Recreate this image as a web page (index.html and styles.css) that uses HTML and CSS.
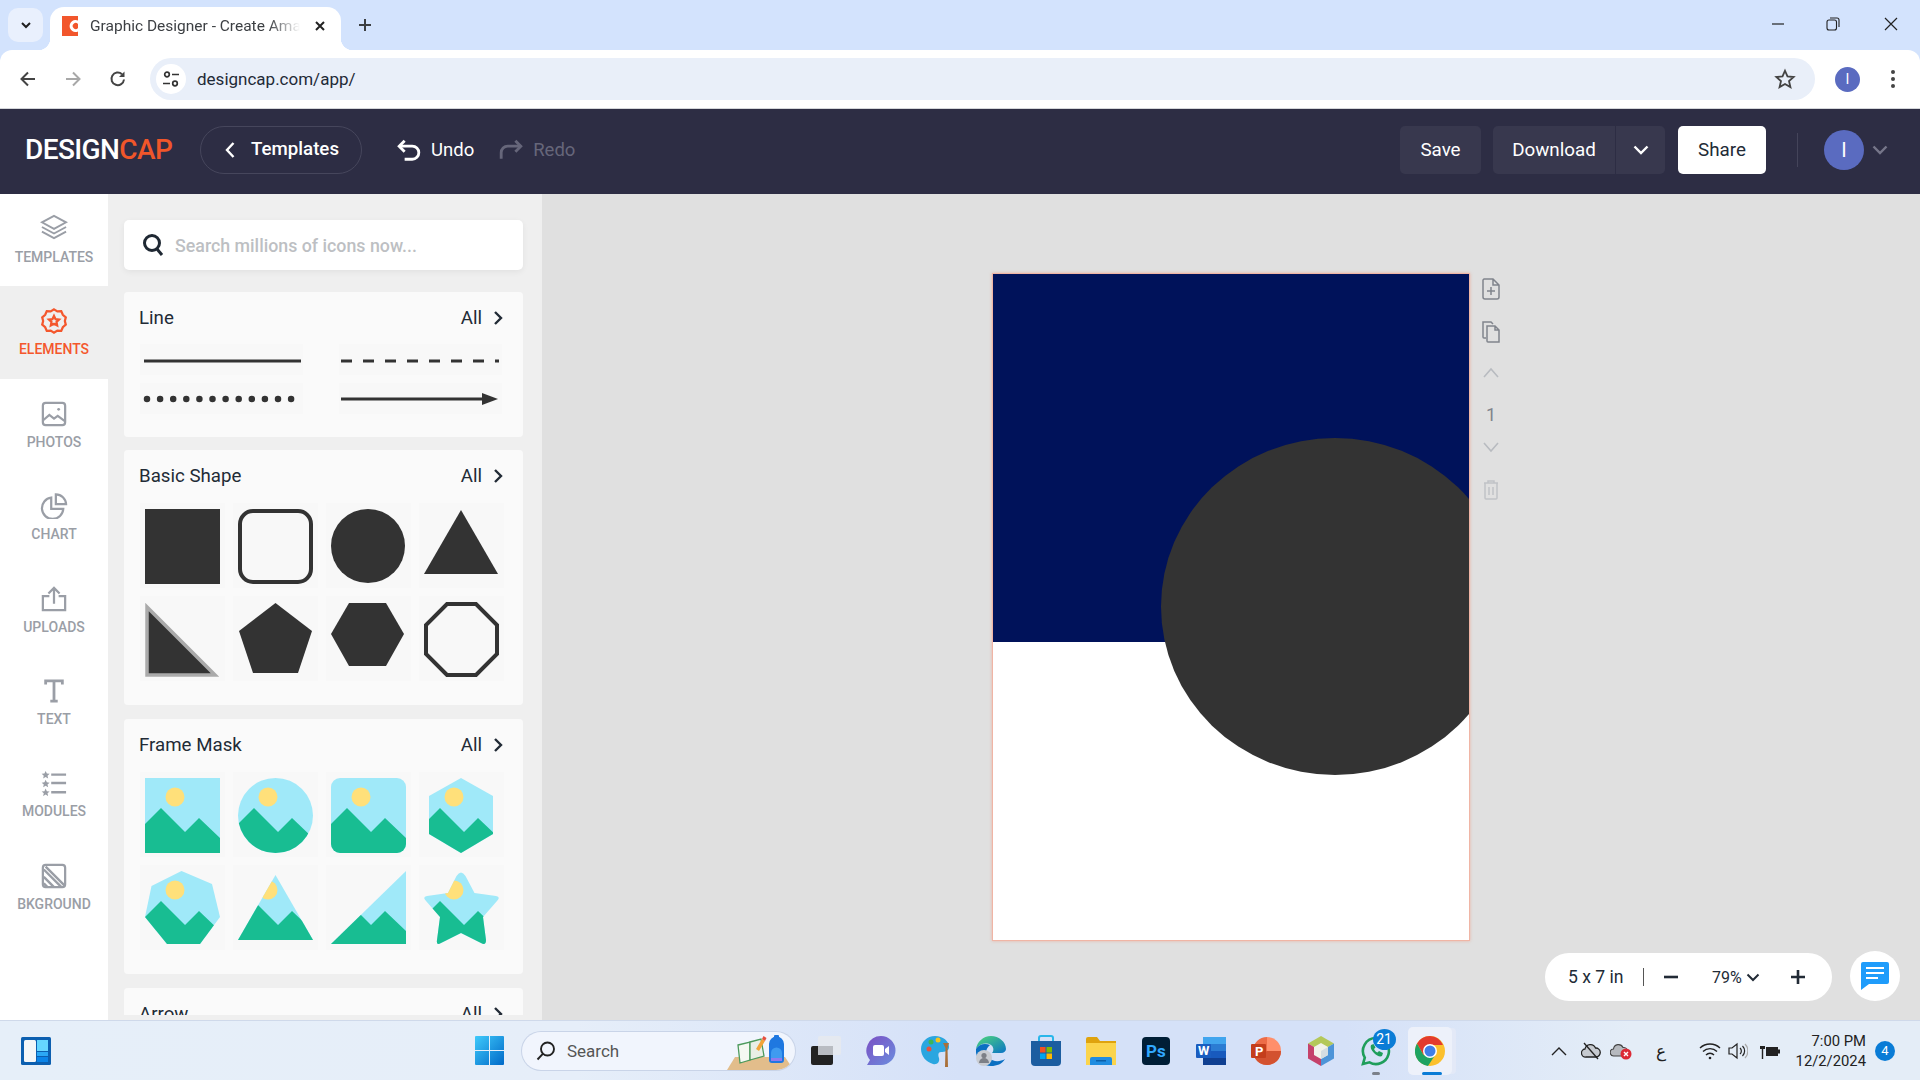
FILE: index.html
```html
<!DOCTYPE html>
<html lang="en">
<head>
<meta charset="utf-8">
<title>Graphic Designer - Create Amazing Graphics</title>
<link rel="stylesheet" href="styles.css">
</head>
<body>
<svg class="defs" width="0" height="0" aria-hidden="true">
  <defs>
    <g id="scene">
      <rect width="75" height="75" fill="#a0e9f9"/>
      <circle cx="30" cy="19" r="9.5" fill="#ffe07a"/>
      <path d="M0 46L16 30L40 54L54 40L75 60V75H0Z" fill="#18bd92"/>
    </g>
    <clipPath id="c-circle"><circle cx="37.5" cy="37.5" r="37.5"/></clipPath>
    <clipPath id="c-round"><rect width="75" height="75" rx="9"/></clipPath>
    <clipPath id="c-hex"><path d="M37 0L69 18V56L37 75L5 56V18Z"/></clipPath>
    <clipPath id="c-hept"><path d="M36.5 0L67 13L75 46L55 73L22 73L0 46L6.5 15Z"/></clipPath>
    <clipPath id="c-tri"><path d="M37.5 4L75 69H0Z"/></clipPath>
    <clipPath id="c-rtri"><path d="M75 0V73H0Z"/></clipPath>
    <clipPath id="c-star"><path d="M32.5 5Q37 -2 41.5 5L50.5 22L72 25Q77 26 73 30L59 46L62 69Q62 75 57 72L37 62L17 72Q12 75 13 69L16 46L2 30Q-2 26 3 25L24 22Z"/></clipPath>
  </defs>
</svg>

<div class="tabstrip">
  <div class="tab-list-btn"><svg width="14" height="14" viewBox="0 0 14 14"><path d="M3 5l4 4 4-4" fill="none" stroke="#1f1f1f" stroke-width="2"/></svg></div>
  <div class="tab">
    <svg class="favicon" width="16" height="20" viewBox="0 0 16 20"><rect width="16" height="20" fill="#f2562c"/><path d="M16 4.500A6 6 0 1 0 16 15.500V12A3 3 0 1 1 16 8Z" fill="#fff"/></svg>
    <span class="tab-title">Graphic Designer - Create Amazing</span>
    <svg class="tab-close" width="12" height="12" viewBox="0 0 12 12"><path d="M2 2l8 8M10 2l-8 8" stroke="#222" stroke-width="2"/></svg>
  </div>
  <svg class="new-tab" width="16" height="16" viewBox="0 0 16 16"><path d="M8 2v12M2 8h12" stroke="#3c3f43" stroke-width="2"/></svg>
  <div class="window-controls">
    <svg width="14" height="14" viewBox="0 0 14 14"><path d="M1 7h12" stroke="#222" stroke-width="1.200"/></svg>
    <svg width="14" height="14" viewBox="0 0 14 14"><rect x="1" y="3" width="9.500" height="10" rx="2" fill="none" stroke="#222" stroke-width="1.100"/><path d="M4 1h7a2 2 0 0 1 2 2v7" fill="none" stroke="#222" stroke-width="1.100"/></svg>
    <svg width="14" height="14" viewBox="0 0 14 14"><path d="M1 1l12 12M13 1L1 13" stroke="#222" stroke-width="1.200"/></svg>
  </div>
</div>

<div class="toolbar">
  <svg class="tb-icon" width="20" height="20" viewBox="0 0 20 20"><path d="M17 10H4M10 3.500L3.500 10l6.500 6.500" fill="none" stroke="#444" stroke-width="2"/></svg>
  <svg class="tb-icon tb-fwd" width="20" height="20" viewBox="0 0 20 20"><path d="M3 10h13M10 3.500l6.500 6.500-6.500 6.500" fill="none" stroke="#a8a8a8" stroke-width="2"/></svg>
  <svg class="tb-icon tb-reload" width="20" height="20" viewBox="0 0 20 20"><path d="M16 10.500A6.300 6.300 0 1 1 14 5.200" fill="none" stroke="#444" stroke-width="2"/><path d="M16.500 2.500V8H11Z" fill="#444"/></svg>
  <div class="omnibox">
    <div class="site-info"><svg width="18" height="18" viewBox="0 0 18 18"><circle cx="5" cy="4.500" r="2.300" fill="none" stroke="#333" stroke-width="1.700"/><path d="M10 4.500h7M1 13.500h7" stroke="#333" stroke-width="1.700"/><circle cx="13" cy="13.500" r="2.300" fill="none" stroke="#333" stroke-width="1.700"/></svg></div>
    <span class="url">designcap.com/app/</span>
    <svg class="star" width="22" height="22" viewBox="0 0 24 24"><path d="M12 3l2.700 6.200 6.700.6-5 4.500 1.500 6.600L12 17.400l-5.900 3.500 1.500-6.600-5-4.500 6.700-.6Z" fill="none" stroke="#444" stroke-width="2"/></svg>
  </div>
  <div class="chrome-avatar">I</div>
  <svg class="chrome-menu" width="6" height="20" viewBox="0 0 6 20"><circle cx="3" cy="3" r="2" fill="#444"/><circle cx="3" cy="10" r="2" fill="#444"/><circle cx="3" cy="17" r="2" fill="#444"/></svg>
</div>

<header class="app-header">
  <div class="logo">DESIGN<span class="logo-accent">CAP</span></div>
  <div class="templates-btn">
    <svg width="12" height="18" viewBox="0 0 12 18"><path d="M9.500 2L3 9l6.500 7" fill="none" stroke="#fff" stroke-width="2.400"/></svg>
    <span>Templates</span>
  </div>
  <div class="history">
    <svg width="24" height="24" viewBox="0 0 22 22"><path d="M7 2.500L2 7.500l5 5" fill="none" stroke="#fff" stroke-width="2.600"/><path d="M2.500 7.500H14a6 6 0 0 1 0 12H7" fill="none" stroke="#fff" stroke-width="2.600"/></svg>
    <span>Undo</span>
  </div>
  <div class="history is-disabled">
    <svg width="24" height="24" viewBox="0 0 22 22"><path d="M15 2.500l5 5-5 5" fill="none" stroke="#66667a" stroke-width="2.600"/><path d="M19.500 7.500H8a6 6 0 0 0-6 6V19" fill="none" stroke="#66667a" stroke-width="2.600"/></svg>
    <span>Redo</span>
  </div>
  <div class="header-actions">
    <div class="dark-btn save-btn">Save</div>
    <div class="dark-btn download-btn">
      <span class="download-label">Download</span>
      <span class="download-caret"><svg width="16" height="10" viewBox="0 0 16 10"><path d="M1.500 1.500L8 8l6.500-6.500" fill="none" stroke="#fff" stroke-width="2.400"/></svg></span>
    </div>
    <div class="share-btn">Share</div>
    <div class="header-divider"></div>
    <div class="user-avatar">I</div>
    <svg class="user-caret" width="16" height="10" viewBox="0 0 16 10"><path d="M1.500 1.500L8 8l6.500-6.500" fill="none" stroke="#76768a" stroke-width="2.400"/></svg>
  </div>
</header>

<main class="main">
  <nav class="sidebar">
    <div class="nav-item">
      <svg width="28" height="28" viewBox="0 0 28 28" fill="none" stroke="#9a9ea6" stroke-width="2"><path d="M14 2L27 9 14 16 1 9Z"/><path d="M1 14l13 7 13-7M1 19l13 7 13-7"/></svg>
      <span>TEMPLATES</span>
    </div>
    <div class="nav-item is-active">
      <svg width="28" height="28" viewBox="0 0 28 28" fill="none" stroke="#f4572d" stroke-width="2.400"><path d="M14 1.500l3.600 2.200 4.200-.3 1.700 3.900 3.200 2.700-1 4 1 4-3.200 2.700-1.700 3.900-4.200-.3L14 26.500l-3.600-2.200-4.200.3-1.700-3.900L1.300 18l1-4-1-4 3.200-2.700 1.700-3.900 4.200.3Z"/><path d="M14 8.500l1.700 3.500 3.800.5-2.800 2.600.7 3.800-3.400-1.800-3.400 1.800.7-3.800-2.800-2.600 3.800-.5Z"/></svg>
      <span>ELEMENTS</span>
    </div>
    <div class="nav-item">
      <svg width="28" height="28" viewBox="0 0 28 28" fill="none" stroke="#9a9ea6" stroke-width="2.400"><rect x="2" y="2" width="24" height="24" rx="3"/><path d="M2 21l7-6 5 4 4-3 8 6"/><circle cx="19" cy="9" r="1.500" fill="#9a9ea6" stroke="none"/></svg>
      <span>PHOTOS</span>
    </div>
    <div class="nav-item">
      <svg width="30" height="28" viewBox="0 0 30 28" fill="none" stroke="#9a9ea6" stroke-width="2.400"><path d="M12 5A11.500 11.500 0 1 0 25 17H12Z"/><path d="M17 1.500A11 11 0 0 1 28 12H17Z"/></svg>
      <span>CHART</span>
    </div>
    <div class="nav-item">
      <svg width="28" height="28" viewBox="0 0 28 28" fill="none" stroke="#9a9ea6" stroke-width="2.400"><path d="M9 11H2v15h24V11h-7"/><path d="M14 19V2M8 8l6-6 6 6"/></svg>
      <span>UPLOADS</span>
    </div>
    <div class="nav-item">
      <svg width="28" height="28" viewBox="0 0 28 28" fill="none" stroke="#9a9ea6" stroke-width="3"><path d="M5 7V3h18v4M14 3v22M10 25h8"/></svg>
      <span>TEXT</span>
    </div>
    <div class="nav-item">
      <svg width="28" height="28" viewBox="0 0 28 28"><path d="M5 1l1.300 2.800 3 .3-2.300 2 .7 3L5 7.500 2.300 9.100l.7-3-2.300-2 3-.3Z M5 10.500l1.300 2.800 3 .3-2.300 2 .7 3L5 17l-2.700 1.600.7-3-2.300-2 3-.3Z M5 20l1.300 2.800 3 .3-2.300 2 .7 3L5 26.500l-2.700 1.600.7-3-2.300-2 3-.3Z" fill="#9a9ea6"/><path d="M11 5h16M11 14h16M11 24h16" stroke="#9a9ea6" stroke-width="2.600"/></svg>
      <span>MODULES</span>
    </div>
    <div class="nav-item">
      <svg width="28" height="28" viewBox="0 0 28 28" fill="none" stroke="#9a9ea6" stroke-width="2.400"><path d="M3 7l19 19M5 4l21 21M3 15l11 11M3 22l4 4" stroke-width="2.600"/><path d="M9 3h17v17Z" fill="#fff" stroke="none"/><rect x="2" y="2" width="24" height="24" rx="3"/></svg>
      <span>BKGROUND</span>
    </div>
  </nav>

  <section class="panel">
    <div class="panel-search">
      <svg width="22" height="24" viewBox="0 0 22 24" fill="none" stroke="#1f2833" stroke-width="3"><circle cx="10" cy="10" r="7.500"/><path d="M15 16l5 6"/></svg>
      <span>Search millions of icons now...</span>
    </div>

    <div class="card card-line">
      <div class="card-head"><span>Line</span><span class="card-all">All<svg width="10" height="16" viewBox="0 0 10 16"><path d="M2 2l6 6-6 6" fill="none" stroke="#222b36" stroke-width="2.400"/></svg></span></div>
      <div class="line-grid">
        <div class="line-cell"><svg width="163" height="31" viewBox="0 0 163 31"><path d="M4 17H161" stroke="#333" stroke-width="3"/></svg></div>
        <div class="line-cell"><svg width="163" height="31" viewBox="0 0 163 31"><path d="M2 17H160" stroke="#333" stroke-width="3" stroke-dasharray="11 11"/></svg></div>
        <div class="line-cell"><svg width="163" height="31" viewBox="0 0 163 31"><path d="M7 16H155" stroke="#333" stroke-width="6.500" stroke-linecap="round" stroke-dasharray="0 13.100"/></svg></div>
        <div class="line-cell"><svg width="163" height="31" viewBox="0 0 163 31"><path d="M2 16H150" stroke="#333" stroke-width="3"/><path d="M143 10L159 16L143 22Z" fill="#333"/></svg></div>
      </div>
    </div>

    <div class="card">
      <div class="card-head"><span>Basic Shape</span><span class="card-all">All<svg width="10" height="16" viewBox="0 0 10 16"><path d="M2 2l6 6-6 6" fill="none" stroke="#222b36" stroke-width="2.400"/></svg></span></div>
      <div class="thumb-grid">
        <div class="thumb"><svg viewBox="0 0 75 75"><rect width="75" height="75" fill="#333"/></svg></div>
        <div class="thumb"><svg viewBox="0 0 75 75"><rect x="2" y="2" width="71" height="71" rx="13" fill="none" stroke="#333" stroke-width="4"/></svg></div>
        <div class="thumb"><svg viewBox="0 0 75 75"><circle cx="37" cy="37" r="37" fill="#333"/></svg></div>
        <div class="thumb"><svg viewBox="0 0 75 75"><path d="M37 1L74 65H0Z" fill="#333"/></svg></div>
        <div class="thumb"><svg viewBox="0 0 75 75"><path d="M2 5L70 73H2Z" fill="#333" stroke="#aaa" stroke-width="3.500"/></svg></div>
        <div class="thumb"><svg viewBox="0 0 75 75"><path d="M37.500 1L74 29L60 71H15L1 29Z" fill="#333"/></svg></div>
        <div class="thumb"><svg viewBox="0 0 75 75"><path d="M18 1H55L73 32L55 64H18L0 32Z" fill="#333"/></svg></div>
        <div class="thumb"><svg viewBox="0 0 75 75"><path d="M23 2H52L73 23V52L52 73H23L2 52V23Z" fill="none" stroke="#333" stroke-width="4"/></svg></div>
      </div>
    </div>

    <div class="card">
      <div class="card-head"><span>Frame Mask</span><span class="card-all">All<svg width="10" height="16" viewBox="0 0 10 16"><path d="M2 2l6 6-6 6" fill="none" stroke="#222b36" stroke-width="2.400"/></svg></span></div>
      <div class="thumb-grid">
        <div class="thumb"><svg viewBox="0 0 75 75"><use href="#scene"/></svg></div>
        <div class="thumb"><svg viewBox="0 0 75 75"><g clip-path="url(#c-circle)"><use href="#scene"/></g></svg></div>
        <div class="thumb"><svg viewBox="0 0 75 75"><g clip-path="url(#c-round)"><use href="#scene"/></g></svg></div>
        <div class="thumb"><svg viewBox="0 0 75 75"><g clip-path="url(#c-hex)"><use href="#scene"/></g></svg></div>
        <div class="thumb"><svg viewBox="0 0 75 75"><g clip-path="url(#c-hept)"><use href="#scene"/></g></svg></div>
        <div class="thumb"><svg viewBox="0 0 75 75"><g clip-path="url(#c-tri)"><use href="#scene"/></g></svg></div>
        <div class="thumb"><svg viewBox="0 0 75 75"><g clip-path="url(#c-rtri)"><use href="#scene"/></g></svg></div>
        <div class="thumb"><svg viewBox="0 0 75 75"><g clip-path="url(#c-star)"><use href="#scene"/></g></svg></div>
      </div>
    </div>

    <div class="card">
      <div class="card-head"><span>Arrow</span><span class="card-all">All<svg width="10" height="16" viewBox="0 0 10 16"><path d="M2 2l6 6-6 6" fill="none" stroke="#222b36" stroke-width="2.400"/></svg></span></div>
    </div>
  </section>

  <section class="canvas">
    <div class="artboard">
      <div class="art-top"></div>
      <div class="art-bottom"></div>
      <div class="art-circle"></div>
    </div>
    <div class="page-tools">
      <svg width="18" height="22" viewBox="0 0 18 22" fill="none" stroke="#80848c" stroke-width="1.500"><path d="M2 1h9l6 6v12a2 2 0 0 1-2 2H3a2 2 0 0 1-2-2V2ZM11 1v6h6M9 9v8M5 13h8"/></svg>
      <svg width="18" height="22" viewBox="0 0 18 22" fill="none" stroke="#80848c" stroke-width="1.500"><path d="M4 17H2a1 1 0 0 1-1-1V1h8l2 2"/><path d="M5 5h8l4 4v12H6a1 1 0 0 1-1-1ZM13 5v4h4"/></svg>
      <svg width="18" height="12" viewBox="0 0 18 12" fill="none" stroke="#b8bbc0" stroke-width="1.600"><path d="M2 10l7-8 7 8"/></svg>
      <span class="page-number">1</span>
      <svg width="18" height="12" viewBox="0 0 18 12" fill="none" stroke="#b8bbc0" stroke-width="1.600"><path d="M2 2l7 8 7-8"/></svg>
      <svg width="16" height="20" viewBox="0 0 16 20" fill="none" stroke="#c0c2c6" stroke-width="1.500"><path d="M1 3h14M5 3V1h6v2M2 3v15a1 1 0 0 0 1 1h10a1 1 0 0 0 1-1V3M6 7v8M10 7v8"/></svg>
    </div>

    <div class="zoom-pill">
      <span class="zoom-size">5 x 7 in</span>
      <span class="zoom-sep"></span>
      <svg class="zoom-minus" width="14" height="4" viewBox="0 0 14 4"><path d="M0 2h14" stroke="#222b36" stroke-width="2.600"/></svg>
      <span class="zoom-value">79%</span>
      <svg class="zoom-caret" width="14" height="9" viewBox="0 0 14 9"><path d="M1.500 1.500L7 7l5.500-5.500" fill="none" stroke="#222b36" stroke-width="2"/></svg>
      <svg class="zoom-plus" width="14" height="14" viewBox="0 0 14 14"><path d="M0 7h14M7 0v14" stroke="#222b36" stroke-width="2.600"/></svg>
    </div>
    <div class="chat-btn">
      <svg width="28" height="28" viewBox="0 0 28 28"><path d="M2 0h24a2 2 0 0 1 2 2v18a2 2 0 0 1-2 2H8l-8 6V2a2 2 0 0 1 2-2Z" fill="#1f9cfb"/><path d="M5 6h18M5 11h18M5 16h12" stroke="#fff" stroke-width="2.200"/></svg>
    </div>
  </section>
</main>

<footer class="taskbar">
  <svg class="widgets" width="30" height="28" viewBox="0 0 30 28"><rect width="30" height="28" rx="1.500" fill="#0c5fb0"/><rect x="3" y="3" width="12" height="22" rx="1.500" fill="#f4f6f8"/><rect x="16" y="3" width="11" height="11" fill="#66d6ff"/><rect x="16" y="15" width="11" height="4" fill="#2ba8f5"/><rect x="16" y="20" width="11" height="5" fill="#0b84e8"/></svg>
  <svg class="start" width="29" height="29" viewBox="0 0 29 29"><defs><linearGradient id="g-start" x1="0" y1="0" x2="1" y2="1"><stop offset="0" stop-color="#3fcafb"/><stop offset="1" stop-color="#0069c8"/></linearGradient></defs><path d="M0 1a1 1 0 0 1 1-1h13v14H0ZM15 0h13a1 1 0 0 1 1 1v13H15ZM0 15h14v14H1a1 1 0 0 1-1-1ZM15 15h14v13a1 1 0 0 1-1 1H15Z" fill="url(#g-start)"/></svg>
  <div class="task-search">
    <svg width="20" height="20" viewBox="0 0 20 20" fill="none" stroke="#222" stroke-width="1.900"><circle cx="11.500" cy="8" r="6.500"/><path d="M6.800 12.800L1.500 18.500"/></svg>
    <span>Search</span>
    <svg class="search-art" width="64" height="36" viewBox="0 0 64 36"><path d="M8 23h50l6 9-6 4H0Z" fill="#e2bd8b"/><path d="M11 11l12-3 0 18-10 3Z" fill="#f5f8f2" stroke="#4c9a5c" stroke-width="1.300"/><path d="M23 8l11-3 3 17-14 4Z" fill="#e9efe6" stroke="#4c9a5c" stroke-width="1.300"/><path d="M29 15l6-10 3 2-6 10Z" fill="#f2a43a"/><path d="M35 5l1.500-3 3 2-1.500 3Z" fill="#e5503f"/><path d="M42 10a7.500 7.500 0 0 1 15 0v16a3 3 0 0 1-3 3H45a3 3 0 0 1-3-3Z" fill="#1f78e0"/><rect x="47" y="1" width="5" height="3" rx="1" fill="#1f78e0"/><path d="M44 19a5.500 5.500 0 0 1 11 0v6H44Z" fill="#3f9bf0"/><rect x="44" y="24" width="11" height="3" fill="#8f7af0"/></svg>
  </div>
  <div class="task-icons">
    <div class="task-slot">
      <svg width="30" height="29" viewBox="0 0 30 29"><rect y="10" width="22" height="19" rx="2" fill="#222"/><rect x="7" width="23" height="19" rx="2" fill="#e6e9ef" opacity=".92"/><rect x="7" y="10" width="15" height="9" fill="#b9bcc2"/></svg>
    </div>
    <div class="task-slot">
      <svg width="30" height="30" viewBox="0 0 30 30"><defs><linearGradient id="g-meet" x1="0" y1="0" x2="1" y2="1"><stop offset="0" stop-color="#7b4fc4"/><stop offset="1" stop-color="#6b8ede"/></linearGradient></defs><path d="M15 0a14.500 14.500 0 0 1 0 29H1l3-5A14.500 14.500 0 0 1 15 0Z" fill="url(#g-meet)"/><rect x="7" y="9" width="11" height="11" rx="2" fill="#fff"/><path d="M19 13l4-3v9l-4-3Z" fill="#fff"/></svg>
    </div>
    <div class="task-slot">
      <svg width="30" height="32" viewBox="0 0 30 32"><path d="M14 1c8 0 14 5 14 11 0 4-4 5-8 5-3 0-3 3-2 6 1 4-2 7-6 6C5 27 0 21 0 14 0 7 6 1 14 1Z" fill="#2aa6e0"/><circle cx="8" cy="14" r="2.500" fill="#e8523f"/><circle cx="10" cy="7" r="2.500" fill="#3bb55a"/><circle cx="17" cy="5" r="2.500" fill="#f5c51d"/><path d="M22 8h6l-1.500 5 .5 19h-3l.5-19Z" fill="#a9703a"/></svg>
    </div>
    <div class="task-slot">
      <svg width="30" height="30" viewBox="0 0 30 30"><defs><linearGradient id="g-edge" x1="0" y1="0" x2="1" y2="1"><stop offset="0" stop-color="#4fd87a"/><stop offset="1" stop-color="#0b74c6"/></linearGradient></defs><path d="M15 0C7 0 1 6 0 13c3-5 10-7 15-4 3 2 3 6 1 8h9c3 0 5-2 5-4C30 6 23 0 15 0Z" fill="url(#g-edge)"/><path d="M0 13c-1 9 6 17 15 17 6 0 11-2 14-7-5 3-12 3-16-1-4-3-4-9 1-13C9 7 3 8 0 13Z" fill="#0a6fc2"/><circle cx="8" cy="22" r="8" fill="#c9ccd2"/><circle cx="8" cy="19.500" r="2.600" fill="#7d8087"/><path d="M3 27a5 5 0 0 1 10 0Z" fill="#7d8087"/></svg>
    </div>
    <div class="task-slot">
      <svg width="30" height="32" viewBox="0 0 30 32"><path d="M8 6V3a2 2 0 0 1 2-2h10a2 2 0 0 1 2 2v3" fill="none" stroke="#29b6ea" stroke-width="2"/><path d="M0 6h30v21a4 4 0 0 1-4 4H4a4 4 0 0 1-4-4Z" fill="#1c5da0"/><rect x="9" y="12" width="5.500" height="5.500" fill="#f25022"/><rect x="15.500" y="12" width="5.500" height="5.500" fill="#7fba00"/><rect x="9" y="18.500" width="5.500" height="5.500" fill="#00a4ef"/><rect x="15.500" y="18.500" width="5.500" height="5.500" fill="#ffb900"/></svg>
    </div>
    <div class="task-slot">
      <svg width="30" height="28" viewBox="0 0 30 28"><path d="M0 2a2 2 0 0 1 2-2h9l3 4h16v6H0Z" fill="#dfa30e"/><path d="M0 6h30v22H0Z" fill="#fbd44c"/><path d="M6 20h18a2 2 0 0 1 2 2v6H4v-6a2 2 0 0 1 2-2Z" fill="#1f8ce0"/><rect x="10" y="23" width="10" height="1.500" fill="#0b5fa8"/></svg>
    </div>
    <div class="task-slot">
      <svg width="28" height="28" viewBox="0 0 28 28"><rect width="28" height="28" rx="4" fill="#001e36"/><text x="4" y="20" class="ps-text">Ps</text></svg>
    </div>
    <div class="task-slot">
      <svg width="30" height="28" viewBox="0 0 30 28"><rect x="7" width="23" height="7" fill="#41a5ee"/><rect x="7" y="7" width="23" height="7" fill="#2b7cd3"/><rect x="7" y="14" width="23" height="7" fill="#185abd"/><rect x="7" y="21" width="23" height="7" fill="#103f91"/><rect y="7" width="15" height="14" rx="1" fill="#1a5dc0"/><text x="2" y="18" class="office-text">W</text></svg>
    </div>
    <div class="task-slot">
      <svg width="30" height="28" viewBox="0 0 30 28"><path d="M16 0a14 14 0 0 1 14 14H16Z" fill="#ff8f6b"/><path d="M16 0a14 14 0 0 0-14 14 14 14 0 0 0 28 0H16Z" fill="#ed6c47"/><path d="M30 14a14 14 0 0 1-14 14 14 14 0 0 1-12-7l12-7Z" fill="#d35230"/><rect y="7" width="15" height="14" rx="1" fill="#c43e1c"/><text x="4" y="18.500" class="office-text">P</text></svg>
    </div>
    <div class="task-slot">
      <svg width="28" height="30" viewBox="0 0 28 30"><path d="M14 0L27 7.500 14 15 1 7.500Z" fill="#b4c85a"/><path d="M1 7.500L14 15V30L1 22.500Z" fill="#c5416a"/><path d="M27 7.500L14 15V30L27 22.500Z" fill="#4d94d8"/><path d="M14 7L21 11V19L14 23L7 19V11Z" fill="#f2f2ea"/><path d="M14 15L21 11V19L14 23Z" fill="#d5dde2"/></svg>
    </div>
    <div class="task-slot task-whatsapp">
      <svg width="30" height="30" viewBox="0 0 30 30" fill="none" stroke="#1f9e5b" stroke-width="2.600"><path d="M15 2a13 13 0 1 1-6.500 24.300L2 28l1.800-6.300A13 13 0 0 1 15 2Z"/><path d="M10 9c-1 2 0 5 3 8s6 4 8 3l1-3-4-2-1.500 1.500c-1.500-.5-3-2-3.500-3.500L14.500 11.500 12.500 8Z" fill="#1f9e5b" stroke="none"/></svg>
      <span class="task-badge">21</span>
    </div>
    <div class="task-slot task-chrome">
      <svg width="30" height="30" viewBox="0 0 30 30"><circle cx="15" cy="15" r="15" fill="#fbc02d"/><path d="M15 0A15 15 0 0 0 2 7.500L8.500 19 15 9h13A15 15 0 0 0 15 0Z" fill="#e33b2e"/><path d="M2 7.500A15 15 0 0 0 13 30l6.500-10-11 -1Z" fill="#1ea362"/><circle cx="15" cy="15" r="7" fill="#fff"/><circle cx="15" cy="15" r="5.500" fill="#3f7fe8"/></svg>
    </div>
  </div>
  <div class="tray">
    <svg class="tray-caret" width="16" height="10" viewBox="0 0 16 10"><path d="M1 9l7-7 7 7" fill="none" stroke="#222" stroke-width="1.400"/></svg>
    <svg class="tray-cloud" width="20" height="18" viewBox="0 0 20 18"><path d="M5 15a4 4 0 0 1-1-8 5.500 5.500 0 0 1 10.500-1A4.500 4.500 0 0 1 15 15Z" fill="#c6cad0" stroke="#222" stroke-width="1.300"/><path d="M3 1l14 16" stroke="#222" stroke-width="1.300"/></svg>
    <svg class="tray-cloud2" width="22" height="18" viewBox="0 0 22 18"><path d="M4 14a3.500 3.500 0 0 1-.5-7A5 5 0 0 1 13 5.500 4 4 0 0 1 14 14Z" fill="#b6b9be" stroke="#444" stroke-width="1.100"/><circle cx="16" cy="12" r="5.500" fill="#dc2a36"/><path d="M14 10l4 4M18 10l-4 4" stroke="#fff" stroke-width="1.400"/></svg>
    <span class="tray-lang">ع</span>
    <svg class="tray-wifi" width="22" height="18" viewBox="0 0 22 18" fill="none" stroke="#222" stroke-width="1.400"><path d="M1 6a14.500 14.500 0 0 1 20 0M4 9.500a10 10 0 0 1 14 0M7 13a5.500 5.500 0 0 1 8 0"/><circle cx="11" cy="16" r="1.300" fill="#222" stroke="none"/></svg>
    <svg class="tray-vol" width="20" height="18" viewBox="0 0 20 18" fill="none" stroke="#222" stroke-width="1.200"><path d="M1 6h3l5-4v14l-5-4H1Z"/><path d="M12 6a4 4 0 0 1 0 6M14.500 4a7 7 0 0 1 0 10"/><path d="M17 2a10 10 0 0 1 0 14" stroke="#aaa"/></svg>
    <svg class="tray-batt" width="20" height="18" viewBox="0 0 20 18"><rect x="6" y="5" width="12" height="9" fill="#222"/><rect x="18" y="7.500" width="2" height="4" fill="#222"/><path d="M1 1v3M4 1v3M0 4h5v3H3.200v10H1.800V7H0Z" fill="#222"/></svg>
    <div class="clock"><span>7:00 PM</span><span>12/2/2024</span></div>
    <span class="notif">4</span>
  </div>
</footer>
</body>
</html>
```
FILE: styles.css
```css
* { box-sizing: border-box; }
html, body { margin: 0; padding: 0; }
body {
  width: 1920px;
  height: 1080px;
  overflow: hidden;
  display: flex;
  flex-direction: column;
  background: #d3e3fd;
  font-family: Roboto, "Liberation Sans", sans-serif;
  color: #222b36;
}
svg { display: block; flex: none; }
.defs { position: absolute; }

/* Browser chrome */
.tabstrip { height: 50px; display: flex; padding-left: 8px; flex: none; }
.tab-list-btn {
  width: 35px; height: 34px; margin-top: 8px; border-radius: 10px;
  background: #e9f0fd; display: flex; align-items: center; justify-content: center;
}
.tab {
  position: relative; width: 291px; height: 43px; margin: 7px 0 0 7px;
  background: #fff; border-radius: 14px 14px 0 0;
  display: flex; align-items: center; padding: 0 15px 6px 12px;
}
.tab::before, .tab::after {
  content: ""; position: absolute; bottom: 0; width: 12px; height: 12px;
}
.tab::before { left: -12px; background: radial-gradient(circle at 0 0, transparent 12px, #fff 12.500px); }
.tab::after { right: -12px; background: radial-gradient(circle at 100% 0, transparent 12px, #fff 12.500px); }
.favicon { margin-right: 12px; }
.tab-title {
  width: 210px; white-space: nowrap; overflow: hidden; font-size: 15.500px; color: #3c3f43;
  -webkit-mask-image: linear-gradient(90deg, #000 85%, transparent 100%);
  mask-image: linear-gradient(90deg, #000 85%, transparent 100%);
}
.tab-close { margin-left: auto; }
.new-tab { margin: 17px 0 0 16px; }
.window-controls { margin-left: auto; display: flex; gap: 41px; padding: 17px 22px 0 0; }
.window-controls svg:last-child { margin-left: 3px; }

.toolbar {
  height: 58px; flex: none; background: #fff; border-radius: 12px 12px 0 0;
  display: flex; align-items: center; padding-left: 18px;
}
.tb-fwd { margin-left: 25px; }
.tb-reload { margin-left: 25px; }
.omnibox {
  width: 1665px; height: 42px; margin-left: 22px; border-radius: 21px; background: #e9eff9;
  display: flex; align-items: center; padding-left: 6px;
}
.site-info {
  width: 30px; height: 30px; border-radius: 50%; background: #fff;
  display: flex; align-items: center; justify-content: center;
}
.url { margin-left: 11px; font-size: 17px; color: #1f2a37; }
.star { margin-left: auto; margin-right: 19px; }
.chrome-avatar {
  width: 25px; height: 25px; margin-left: 20px; border-radius: 50%; background: #5a6bc0;
  color: #fff; font-size: 14px; display: flex; align-items: center; justify-content: center;
}
.chrome-menu { margin-left: 30px; }

/* App header */
.app-header {
  height: 86px; flex: none; background: #2d2d44; border-top: 1px solid #d4d6da;
  display: flex; align-items: center; padding: 0 0 4px 25px;
}
.logo { width: 151px; font-size: 28px; font-weight: 500; letter-spacing: -0.600px; color: #fff; white-space: nowrap; line-height: 1; }
.logo-accent { color: #f0562a; }
.templates-btn {
  width: 162px; height: 48px; margin-left: 24px; border: 1px solid #46465c; border-radius: 24px;
  display: flex; align-items: center; padding-left: 23px; gap: 15px;
  font-size: 18.700px; font-weight: 500; color: #fff;
}
.templates-btn span { margin-top: -2px; }
.history { display: flex; align-items: center; gap: 10px; margin-left: 35px; font-size: 18.500px; color: #fff; }
.history.is-disabled { margin-left: 25px; color: #66667a; }
.header-actions { margin-left: auto; display: flex; align-items: center; padding-right: 32px; }
.dark-btn { height: 48px; background: #38384e; border-radius: 5px; color: #fff; font-size: 18.800px; display: flex; align-items: center; }
.save-btn { width: 81px; justify-content: center; }
.download-btn { width: 172px; margin-left: 12px; }
.download-label { width: 122px; text-align: center; }
.download-caret {
  width: 50px; height: 100%; border-left: 1px solid #2d2d44;
  display: flex; align-items: center; justify-content: center;
}
.share-btn {
  width: 88px; height: 48px; margin-left: 13px; background: #fff; border-radius: 5px;
  display: flex; align-items: center; justify-content: center; font-size: 18.800px; color: #222b36;
}
.header-divider { width: 1px; height: 34px; margin-left: 31px; background: #44445a; }
.user-avatar {
  width: 40px; height: 40px; margin-left: 26px; border-radius: 50%; background: #5a6bc0; color: #fff;
  display: flex; align-items: center; justify-content: center; font-size: 20px;
}
.user-caret { margin-left: 8px; }

/* Main */
.main { height: 826px; flex: none; display: flex; overflow: hidden; background: #efefef; }
.sidebar { width: 108px; flex: none; background: #fff; }
.nav-item {
  height: 92.400px; padding-top: 22px; display: flex; flex-direction: column; align-items: center;
  font-size: 14px; font-weight: 500; line-height: 16px; color: #9a9ea6;
}
.nav-item svg { height: 26px; }
.nav-item span { margin-top: 7px; }
.nav-item:first-child { padding-top: 20px; }
.nav-item:first-child span { margin-top: 9px; }
.nav-item.is-active { background: #efefef; color: #f4572d; }

.panel { width: 434px; flex: none; height: 821px; background: #efefef; padding: 26px 19px 0 16px; overflow: hidden; }
.panel-search {
  height: 50px; background: #fff; border-radius: 5px; box-shadow: 0 2px 6px rgba(0,0,0,.06);
  display: flex; align-items: center; padding-left: 18px; gap: 11px;
  font-size: 17.800px; font-weight: 500; color: #bdbfc3; margin-bottom: 22px;
}
.panel-search span { margin-top: 1px; }
.card { background: #fafafa; border-radius: 4px; padding: 0 15px 24px 16px; margin-bottom: 14px; }
.card-line { padding-bottom: 23px; margin-bottom: 13px; }
.card-head { height: 53px; margin-left: -1px; display: flex; align-items: center; justify-content: space-between; font-size: 18.700px; color: #222b36; padding: 0 5px 1px 0; }
.card-all { display: flex; align-items: center; gap: 11px; }
.line-grid { display: grid; grid-template-columns: 163px 163px; column-gap: 36px; row-gap: 8px; margin-top: -1px; }
.line-cell { height: 31px; background: #f8f8f8; }
.thumb-grid { display: grid; grid-template-columns: repeat(4, 85px); gap: 8px; }
.thumb { width: 85px; height: 85px; padding: 6px 5px 4px; background: #f8f8f8; }
.thumb svg { width: 75px; height: 75px; }

/* Canvas */
.canvas { position: relative; flex: 1; background: #e0e0e0; height: 826px; display: flex; align-items: flex-start; padding: 79px 0 0 450px; }
.artboard {
  position: relative; width: 478px; height: 668px; overflow: hidden; background: #fff;
  border: 1px solid #f0b5a5; box-shadow: 0 0 3px rgba(240,150,125,.6); display: flex; flex-direction: column;
}
.art-top { height: 368px; background: #00125a; }
.art-bottom { flex: 1; background: #fff; }
.art-circle { position: absolute; left: 168px; top: 164px; width: 348px; height: 337px; border-radius: 50%; background: #333; }
.page-tools { margin: 5px 0 0 9px; width: 24px; display: flex; flex-direction: column; align-items: center; }
.page-tools > :nth-child(2) { margin-top: 21px; }
.page-tools > :nth-child(3) { margin-top: 24px; }
.page-tools > :nth-child(4) { margin-top: 26px; }
.page-tools > :nth-child(5) { margin-top: 16px; }
.page-tools > :nth-child(6) { margin-top: 27px; }
.page-number { font-size: 18px; line-height: 20px; color: #80848c; }

.zoom-pill {
  position: absolute; left: 1003px; top: 759px; width: 287px; height: 48px; border-radius: 24px; background: #fff;
  display: flex; align-items: center; padding-left: 23px; font-size: 17.600px; color: #222b36;
}
.zoom-size { width: 54px; white-space: nowrap; }
.zoom-sep { width: 1px; height: 18px; background: #555; margin-left: 21px; }
.zoom-minus { margin-left: 20px; }
.zoom-value { font-size: 16px; margin-left: 34px; width: 32px; }
.zoom-caret { margin-left: 2px; }
.zoom-plus { margin-left: 31px; }
.chat-btn {
  position: absolute; left: 1308px; top: 757px; width: 50px; height: 50px; border-radius: 50%; background: #fff;
  display: flex; align-items: center; justify-content: center;
}

/* Taskbar */
.taskbar {
  height: 60px; flex: none; display: flex; align-items: center; padding-left: 21px;
  border-top: 1px solid #cfd9ea;
  background: linear-gradient(90deg, #e6eff9 0%, #e6eef9 30%, #d5e1f8 50%, #d5e1f8 70%, #e4edf7 85%, #e4edf7 100%);
}
.start { margin-left: 424px; }
.task-search {
  position: relative; width: 273px; height: 38px; margin-left: 18px; border-radius: 19px; overflow: hidden;
  background: #f1f5fd; box-shadow: 0 0 0 1px #c9d4e8; display: flex; align-items: center; padding-left: 14px; gap: 11px;
  font-size: 17px; color: #555;
}
.search-art { position: absolute; right: 4px; bottom: 0; }
.task-icons { display: flex; margin-left: 3.500px; }
.task-slot { position: relative; width: 55px; height: 48px; display: flex; align-items: center; justify-content: center; }
.task-whatsapp::after {
  content: ""; position: absolute; left: 23px; bottom: 0; width: 8px; height: 3px; border-radius: 2px; background: #7b808a;
}
.task-badge {
  position: absolute; left: 24px; top: 2px; width: 23px; height: 21px; border-radius: 50%; background: #0a7cd6; color: #fff;
  font-size: 14px; display: flex; align-items: center; justify-content: center;
}
.task-chrome { width: 44px; margin-left: 4px; border-radius: 5px; background: #edf1fa; box-shadow: 5px 0 0 -1px #e3e9f7; }
.task-chrome::after {
  content: ""; position: absolute; left: 14px; bottom: 0; width: 20px; height: 3px; border-radius: 2px; background: #0a7cd6;
}
.ps-text { font-family: Roboto, sans-serif; font-size: 17px; font-weight: 700; fill: #31a8ff; }
.office-text { font-family: Roboto, sans-serif; font-size: 13px; font-weight: 700; fill: #fff; }
.tray { margin-left: auto; display: flex; align-items: center; padding-right: 25px; color: #222; }
.tray-cloud { margin-left: 14px; }
.tray-cloud2 { margin-left: 9px; }
.tray-lang { margin-left: 24px; width: 12px; font-size: 17px; font-family: "DejaVu Sans", sans-serif; }
.tray-wifi { margin-left: 31px; }
.tray-vol { margin-left: 7px; }
.tray-batt { margin-left: 12px; }
.clock { margin-left: 16px; width: 70px; display: flex; flex-direction: column; align-items: flex-end; font-size: 14.800px; line-height: 20px; }
.notif {
  width: 20px; height: 20px; margin-left: 9px; border-radius: 50%; background: #0a7cd6; color: #fff;
  font-size: 13px; display: flex; align-items: center; justify-content: center;
}
```
